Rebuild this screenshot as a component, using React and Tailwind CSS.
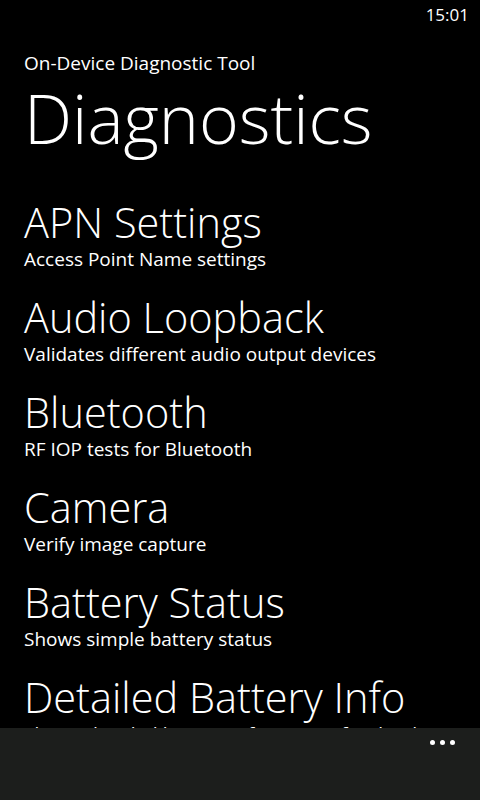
import React from 'react';

const tests = [
  { title: 'APN Settings', desc: 'Access Point Name settings' },
  { title: 'Audio Loopback', desc: 'Validates different audio output devices' },
  { title: 'Bluetooth', desc: 'RF IOP tests for Bluetooth' },
  { title: 'Camera', desc: 'Verify image capture' },
  { title: 'Battery Status', desc: 'Shows simple battery status' },
  { title: 'Detailed Battery Info', desc: 'Shows detailed battery information for the device' },
];

export default function App() {
  return (
    <div className="relative w-[480px] h-[800px] overflow-hidden bg-black text-white font-['Open_Sans',sans-serif]">
      {/* Status bar */}
      <div className="h-[32px] flex justify-end items-start pt-[5px] pr-[11px]">
        <span className="text-[17px] leading-[20px]">15:01</span>
      </div>

      {/* Header */}
      <div className="pl-6">
        <div className="mt-[18px] text-[19px] leading-[26px]">On-Device Diagnostic Tool</div>
        <h1 className="mt-[2px] text-[68px] leading-[80px] font-light whitespace-nowrap">Diagnostics</h1>

        {/* Test list */}
        <ul className="mt-[42px]">
          {tests.map((t) => (
            <li key={t.title} className="h-[95px]">
              <div className="text-[41.5px] leading-[44px] font-light whitespace-nowrap">{t.title}</div>
              <div className="mt-[3px] text-[19px] leading-[24px] whitespace-nowrap">{t.desc}</div>
            </li>
          ))}
        </ul>
      </div>

      {/* Application bar */}
      <div className="absolute bottom-0 left-0 right-0 h-[72px] bg-[#1c1e1c] flex justify-end items-start pt-[12px] pr-[25px]">
        <div className="flex gap-[5px]">
          <span className="w-[5px] h-[5px] rounded-full bg-white" />
          <span className="w-[5px] h-[5px] rounded-full bg-white" />
          <span className="w-[5px] h-[5px] rounded-full bg-white" />
        </div>
      </div>
    </div>
  );
}
